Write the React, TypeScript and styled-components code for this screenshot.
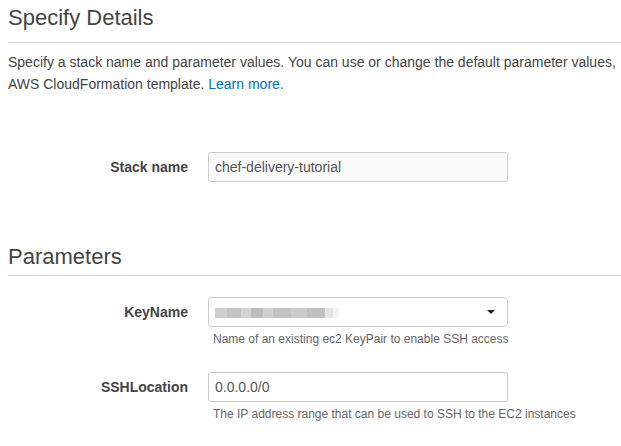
import React from "react";
import styled, { createGlobalStyle } from "styled-components";

const GlobalStyle = createGlobalStyle`
  html, body {
    margin: 0;
    padding: 0;
    background: #fff;
    overflow: hidden;
  }
  body {
    font-family: "Liberation Sans", Arial, Helvetica, sans-serif;
    color: #444;
  }
`;

const Page = styled.div`
  padding: 5px 0 0 8px;
  width: 613px;
`;

const Heading = styled.h2<{ $gap: number }>`
  margin: 0;
  font-size: 22px;
  line-height: 26px;
  font-weight: normal;
  color: #444;
  padding-bottom: ${(p) => p.$gap}px;
  border-bottom: 1px solid #d5d5d5;
`;

const Section = styled.div<{ $top: number }>`
  margin-top: ${(p) => p.$top}px;
`;

const Intro = styled.p`
  margin: 8px 0 0;
  font-size: 14px;
  line-height: 22px;
  color: #444;
  white-space: nowrap;
`;

const Link = styled.a`
  color: #0073bb;
  text-decoration: none;
`;

const Row = styled.div<{ $top: number }>`
  display: grid;
  grid-template-columns: 180px 300px;
  column-gap: 20px;
  margin-top: ${(p) => p.$top}px;
`;

const Label = styled.label`
  text-align: right;
  font-size: 14px;
  font-weight: bold;
  color: #444;
  line-height: 30px;
`;

const Field = styled.div`
  display: flex;
  flex-direction: column;
`;

const TextBox = styled.div<{ $shade?: boolean }>`
  box-sizing: border-box;
  height: 30px;
  border: 1px solid #ccc;
  border-radius: 3px;
  background: ${(p) => (p.$shade ? "#fafafa" : "#fff")};
  padding: 0 6px;
  display: flex;
  align-items: center;
  font-size: 14px;
  color: #555;
`;

const SelectBox = styled(TextBox)`
  border-radius: 4px;
  justify-content: space-between;
  padding-right: 12px;
`;

const Blurred = styled.span`
  display: block;
  width: 124px;
  height: 10px;
  margin-top: 1px;
  background: linear-gradient(
    90deg,
    #cfcfcf 0 12px,
    #c4c4c4 12px 26px,
    #d2d2d2 26px 36px,
    #bdbdbd 36px 48px,
    #d0d0d0 48px 58px,
    #c2c2c2 58px 76px,
    #cacaca 76px 92px,
    #c0c0c0 92px 110px,
    #e4e4e4 110px 118px,
    #f2f2f2 118px 124px
  );
`;

const Caret = styled.span`
  width: 0;
  height: 0;
  border-left: 4px solid transparent;
  border-right: 4px solid transparent;
  border-top: 4px solid #222;
`;

const Help = styled.div`
  margin: 4px 0 0 5px;
  font-size: 12px;
  line-height: 16px;
  color: #666;
  white-space: nowrap;
`;

export default function App() {
  return (
    <Page>
      <GlobalStyle />
      <Heading $gap={11}>Specify Details</Heading>
      <Intro>
        Specify a stack name and parameter values. You can use or change the default parameter values,
        <br />
        AWS CloudFormation template. <Link href="#">Learn more.</Link>
      </Intro>

      <Row $top={57}>
        <Label>Stack name</Label>
        <Field>
          <TextBox $shade>chef-delivery-tutorial</TextBox>
        </Field>
      </Row>

      <Section $top={62}>
        <Heading $gap={5}>Parameters</Heading>
      </Section>

      <Row $top={21}>
        <Label>KeyName</Label>
        <Field>
          <SelectBox>
            <Blurred />
            <Caret />
          </SelectBox>
          <Help>Name of an existing ec2 KeyPair to enable SSH access</Help>
        </Field>
      </Row>

      <Row $top={25}>
        <Label>SSHLocation</Label>
        <Field>
          <TextBox>0.0.0.0/0</TextBox>
          <Help>The IP address range that can be used to SSH to the EC2 instances</Help>
        </Field>
      </Row>
    </Page>
  );
}
